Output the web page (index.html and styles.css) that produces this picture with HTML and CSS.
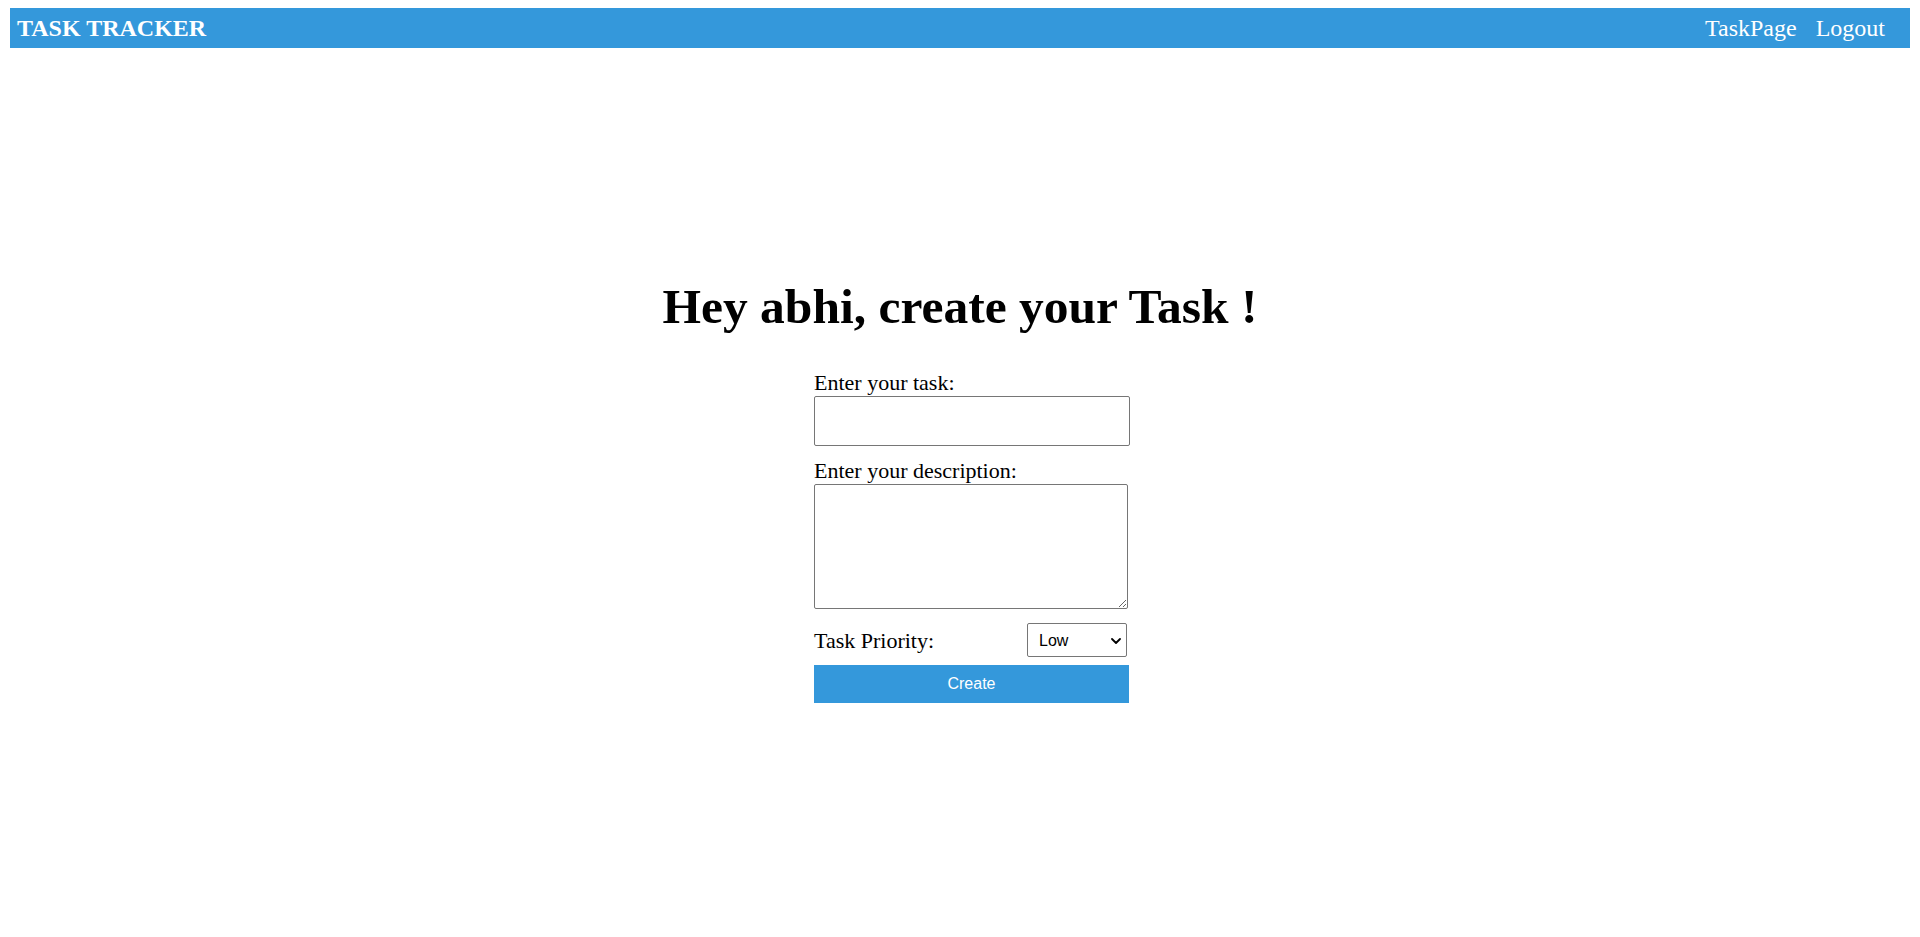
FILE: index.html
```html
<!DOCTYPE html>
<html lang="en">
<head>
<meta charset="utf-8">
<title>Task Tracker</title>
<link rel="stylesheet" href="styles.css">
</head>
<body>
<header class="topbar">
  <div class="brand">TASK TRACKER</div>
  <nav class="nav">
    <a class="nav-link" href="#">TaskPage</a>
    <a class="nav-link" href="#">Logout</a>
  </nav>
</header>
<main class="main">
  <h1 class="title">Hey abhi, create your Task !</h1>
  <form class="task-form">
    <label class="field-label" for="task">Enter your task:</label>
    <input class="task-input" id="task" type="text">
    <label class="field-label" for="desc">Enter your description:</label>
    <textarea class="task-desc" id="desc"></textarea>
    <div class="priority-row">
      <label class="field-label" for="prio">Task Priority:</label>
      <div class="select-wrap">
        <select class="prio-select" id="prio">
          <option>Low</option>
          <option>Medium</option>
          <option>High</option>
        </select>
        <svg class="chevron" width="10" height="6" viewBox="0 0 10 6" aria-hidden="true"><path d="M1 1 L5 5 L9 1" fill="none" stroke="#000" stroke-width="1.8" stroke-linecap="round" stroke-linejoin="round"/></svg>
      </div>
    </div>
    <button class="create-btn" type="button">Create</button>
  </form>
</main>
</body>
</html>
```
FILE: styles.css
```css
html, body {
  margin: 0;
  padding: 0;
}
body {
  padding: 8px 10px;
  font-family: "Liberation Serif", "Times New Roman", serif;
  color: #000;
  background: #fff;
}
.topbar {
  display: flex;
  align-items: center;
  justify-content: space-between;
  height: 40px;
  background: #3498db;
  padding: 0 25px 0 7px;
  color: #fff;
}
.brand {
  font-size: 24px;
  font-weight: bold;
}
.nav {
  display: flex;
  gap: 19px;
}
.nav-link {
  color: #fff;
  text-decoration: none;
  font-size: 24px;
}
.main {
  display: flex;
  flex-direction: column;
  align-items: center;
  padding-top: 230px;
}
.title {
  font-size: 49.5px;
  font-weight: bold;
  margin: 0 0 35px 0;
}
.task-form {
  display: flex;
  flex-direction: column;
  align-items: flex-start;
  width: 316px;
  padding-left: 24px;
}
.field-label {
  font-size: 22px;
  line-height: 25px;
}
.task-input {
  box-sizing: border-box;
  width: 316px;
  height: 50px;
  margin: 1px 0 12px 0;
  border: 1px solid #767676;
  border-radius: 2px;
  font-size: 16px;
}
.task-desc {
  box-sizing: border-box;
  width: 314px;
  height: 125px;
  margin: 1px 0 14px 0;
  border: 1px solid #767676;
  border-radius: 2px;
  resize: both;
}
.priority-row {
  display: flex;
  align-items: center;
  justify-content: space-between;
  width: 313px;
}
.select-wrap {
  position: relative;
  width: 100px;
  height: 34px;
}
.prio-select {
  box-sizing: border-box;
  display: block;
  width: 100px;
  height: 34px;
  padding: 0 20px 0 11px;
  font-family: "Liberation Sans", Arial, sans-serif;
  font-size: 16px;
  border: 1px solid #767676;
  border-radius: 2px;
  background: #fff;
  color: #000;
  appearance: none;
  -webkit-appearance: none;
}
.chevron {
  position: absolute;
  right: 6px;
  top: 15px;
  pointer-events: none;
}
.create-btn {
  width: 315px;
  height: 38px;
  margin-top: 8px;
  border: none;
  background: #3498db;
  color: #fff;
  font-family: "Liberation Sans", Arial, sans-serif;
  font-size: 16px;
  cursor: pointer;
}
```
